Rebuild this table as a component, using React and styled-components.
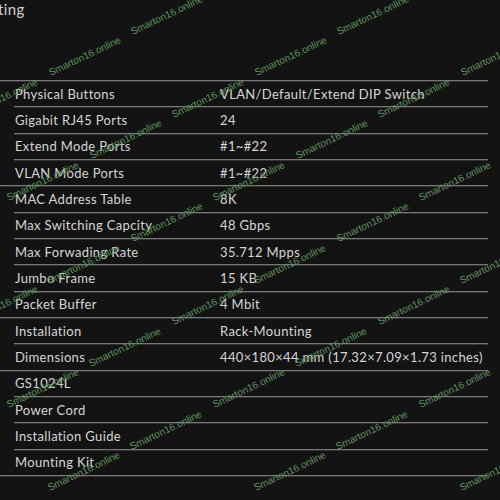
import React from "react";
import styled, { createGlobalStyle } from "styled-components";

const Global = createGlobalStyle`
  html, body { margin: 0; padding: 0; background: #131313; }
  body { overflow: hidden; }
`;

const Page = styled.div`
  position: relative;
  width: 500px;
  height: 500px;
  overflow: hidden;
  background: #131313;
  font-family: Lato, "Noto Sans", sans-serif;
  color: #d4d4d4;
`;

const Title = styled.h2`
  margin: 0 0 0 -2px;
  font-size: 15px;
  line-height: 18px;
  font-weight: 400;
  color: #d0d0d0;
  letter-spacing: 0.4px;
`;

const Table = styled.div`
  margin-top: 62px;
  display: flex;
  flex-direction: column;
`;

const Rule = styled.div`
  height: 1px;
  width: ${(p) => (p.$full ? "488px" : "474px")};
  margin-left: ${(p) => (p.$full ? "0" : "14px")};
  background: #787878;
  box-shadow: 0 1px 0 #333333;
`;

const Row = styled.div`
  height: 25.33px;
  display: grid;
  grid-template-columns: 205px 1fr;
  align-items: center;
  padding-left: 15px;
  font-size: 13px;
  letter-spacing: 0.35px;
  white-space: nowrap;
`;

const Cell = styled.span`
  color: #d6d6d6;
`;

const Overlay = styled.div`
  position: absolute;
  inset: 0;
  pointer-events: none;
`;

const Mark = styled.span`
  position: absolute;
  font-family: "Liberation Sans", Arial, sans-serif;
  font-size: 10px;
  line-height: 10px;
  color: #5f935f;
  white-space: nowrap;
  transform-origin: 0 8.5px;
  transform: rotate(-25.5deg);
`;

const rows = [
  ["Physical Buttons", "VLAN/Default/Extend DIP Switch", false],
  ["Gigabit RJ45 Ports", "24", false],
  ["Extend Mode Ports", "#1~#22", false],
  ["VLAN Mode Ports", "#1~#22", true],
  ["MAC Address Table", "8K", false],
  ["Max Switching Capcity", "48 Gbps", false],
  ["Max Forwading Rate", "35.712 Mpps", false],
  ["Jumbo Frame", "15 KB", false],
  ["Packet Buffer", "4 Mbit", true],
  ["Installation", "Rack-Mounting", false],
  ["Dimensions", "440×180×44 mm (17.32×7.09×1.73 inches)", true],
  ["GS1024L", "", false],
  ["Power Cord", "", false],
  ["Installation Guide", "", false],
  ["Mounting Kit", "", true],
];

function marks() {
  const out = [];
  for (let r = 0; r < 12; r++) {
    const y = 35 + 41.5 * r;
    let base = (133 - 82.5 * r) % 206;
    if (base < 0) base += 206;
    for (let x = base - 206; x < 500; x += 206) {
      out.push({ x, y, key: `${r}-${x}` });
    }
  }
  return out;
}

export default function App() {
  return (
    <>
      <Global />
      <Page>
        <Title>ting</Title>
        <Table>
          <Rule $full />
          {rows.map(([label, value, full]) => (
            <React.Fragment key={label}>
              <Row>
                <Cell>{label}</Cell>
                <Cell>{value}</Cell>
              </Row>
              <Rule $full={full} />
            </React.Fragment>
          ))}
        </Table>
        <Overlay>
          {marks().map((m) => (
            <Mark key={m.key} style={{ left: m.x, top: m.y - 8.5 }}>
              Smarton16.online
            </Mark>
          ))}
        </Overlay>
      </Page>
    </>
  );
}
